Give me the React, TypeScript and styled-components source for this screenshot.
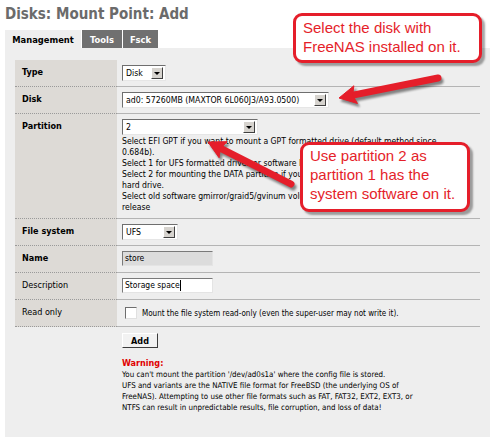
import React from "react";
import styled, { createGlobalStyle } from "styled-components";

const UI = `"DejaVu Sans Condensed", "DejaVu Sans", Verdana, sans-serif`;
const RED = "#e51e2a";

const Global = createGlobalStyle`
  html, body { margin: 0; padding: 0; background: #ffffff; }
  body { font-family: ${UI}; font-stretch: condensed; color: #000; }
`;

const Page = styled.div`
  position: relative;
  width: 500px;
  height: 444px;
  overflow: hidden;
  box-sizing: border-box;
  padding: 0 10px 0 5px;
`;

const Title = styled.h1`
  margin: 0;
  height: 30px;
  box-sizing: border-box;
  padding-top: 5px;
  font-family: ${UI};
  font-size: 15px;
  line-height: 18px;
  font-weight: bold;
  color: #6b6b6b;
`;

const TabBar = styled.div`
  display: flex;
  gap: 1px;
  height: 18px;
`;

const Tab = styled.div<{ $active?: boolean; $w: number }>`
  display: flex;
  align-items: center;
  justify-content: center;
  width: ${(p) => p.$w}px;
  font-size: 9.3px;
  font-weight: bold;
  color: ${(p) => (p.$active ? "#000" : "#fff")};
  background: ${(p) => (p.$active ? "#eeeeee" : "#707070")};
`;

const Panel = styled.div`
  background: #eeeeee;
  height: 389px;
  box-sizing: border-box;
  padding: 12px 10px 0 10px;
`;

const Row = styled.div`
  display: grid;
  grid-template-columns: 102px 1fr;
`;

const Label = styled.div<{ $bold?: boolean }>`
  background: #dddad6;
  border-bottom: 1px dotted #9a9a9a;
  padding: 6px 7px 0;
  font-size: 9px;
  line-height: 12px;
  font-weight: ${(p) => (p.$bold ? "bold" : "normal")};
`;

const Value = styled.div<{ $h?: number }>`
  height: ${(p) => p.$h ?? 27}px;
  box-sizing: border-box;
  border-bottom: 1px solid #b4b4b4;
  padding: 5px 0 0 5px;
  font-size: 8px;
  line-height: 11px;
`;

const Combo = styled.div<{ $w: number }>`
  display: flex;
  width: ${(p) => p.$w}px;
  height: 16px;
  box-sizing: border-box;
  background: #fff;
  border-style: solid;
  border-width: 1px;
  border-color: #6e6e6e #e6e6e6 #e6e6e6 #6e6e6e;
`;

const ComboText = styled.span`
  flex: 1;
  padding-left: 3px;
  font-size: 8.7px;
  line-height: 14px;
  white-space: nowrap;
  overflow: hidden;
`;

const ComboButton = styled.span`
  width: 12px;
  margin: 1px 2px 1px 0;
  box-sizing: border-box;
  background: #d6d3ce;
  border-style: solid;
  border-width: 1px;
  border-color: #fff #404040 #404040 #fff;
  display: flex;
  align-items: center;
  justify-content: center;
  &::after {
    content: "";
    border-left: 3px solid transparent;
    border-right: 3px solid transparent;
    border-top: 3px solid #000;
  }
`;

const Help = styled.div`
  margin-top: 1px;
  font-size: 8.6px;
  line-height: 11px;
  white-space: nowrap;
`;

const TextBox = styled.div<{ $disabled?: boolean }>`
  display: flex;
  align-items: center;
  width: 91px;
  height: 15px;
  box-sizing: border-box;
  padding-left: 2px;
  background: ${(p) => (p.$disabled ? "#dcdcdc" : "#ffffff")};
  border-style: solid;
  border-width: 1px;
  border-color: #7a7a7a #e4e4e4 #e4e4e4 #7a7a7a;
  font-size: 8.5px;
`;

const Caret = styled.span`
  display: inline-block;
  width: 1px;
  height: 11px;
  background: #000;
`;

const CheckLine = styled.label`
  display: flex;
  align-items: center;
  gap: 5px;
  padding: 2px 0 0 3px;
  font-size: 8px;
`;

const CheckBox = styled.span`
  width: 12px;
  height: 12px;
  box-sizing: border-box;
  background: #fff;
  border-style: solid;
  border-width: 1px;
  border-color: #6e6e6e #e0e0e0 #e0e0e0 #6e6e6e;
`;

const ActionCell = styled.div`
  padding: 6px 0 0 5px;
`;

const Button = styled.div`
  display: flex;
  align-items: center;
  justify-content: center;
  width: 36px;
  height: 15px;
  box-sizing: border-box;
  background: #f2f2f2;
  border-style: solid;
  border-width: 1px;
  border-color: #ffffff #3c3c3c #3c3c3c #ffffff;
  font-size: 9px;
  font-weight: bold;
`;

const Warning = styled.div`
  margin-top: 10px;
  font-size: 7.9px;
  line-height: 11px;
  white-space: nowrap;
`;

const WarnTitle = styled.div`
  color: #e00000;
  font-weight: bold;
  font-size: 9px;
`;

const Callout = styled.div<{ $x: number; $y: number; $w: number; $h: number; $pt: number }>`
  position: absolute;
  left: ${(p) => p.$x}px;
  top: ${(p) => p.$y}px;
  width: ${(p) => p.$w}px;
  height: ${(p) => p.$h}px;
  box-sizing: border-box;
  padding: ${(p) => p.$pt}px 6px 0 7px;
  background: #fff;
  border: 3px solid ${RED};
  border-radius: 9px;
  box-shadow: 3px 3px 2px rgba(0, 0, 0, 0.35);
  font-family: "Liberation Sans", Arial, sans-serif;
  font-stretch: normal;
  font-size: 15px;
  line-height: 19px;
  color: ${RED};
  white-space: nowrap;
`;

const Overlay = styled.svg`
  position: absolute;
  left: 0;
  top: 0;
  pointer-events: none;
`;

function Select({ w, text }: { w: number; text: string }) {
  return (
    <Combo $w={w}>
      <ComboText>{text}</ComboText>
      <ComboButton />
    </Combo>
  );
}

function Arrow({ tail, tip }: { tail: [number, number]; tip: [number, number] }) {
  const dx = tip[0] - tail[0];
  const dy = tip[1] - tail[1];
  const len = Math.hypot(dx, dy);
  const ux = dx / len;
  const uy = dy / len;
  const hl = 17;
  const hw = 9;
  const bx = tip[0] - ux * hl;
  const by = tip[1] - uy * hl;
  const nx = -uy;
  const ny = ux;
  const pts = `${tip[0]},${tip[1]} ${bx + nx * hw},${by + ny * hw} ${bx + ux * 3},${by + uy * 3} ${bx - nx * hw},${by - ny * hw}`;
  const shape = (color: string) => (
    <>
      <line x1={tail[0]} y1={tail[1]} x2={bx + ux * 4} y2={by + uy * 4} stroke={color} strokeWidth={7} strokeLinecap="round" />
      <polygon points={pts} fill={color} stroke={color} strokeWidth={1} strokeLinejoin="round" />
    </>
  );
  return (
    <>
      <g transform="translate(2,3)" filter="url(#blur)" opacity={0.45}>
        {shape("#000")}
      </g>
      {shape(RED)}
    </>
  );
}

export default function App() {
  return (
    <>
      <Global />
      <Page>
        <Title>Disks: Mount Point: Add</Title>
        <TabBar>
          <Tab $active $w={76}>Management</Tab>
          <Tab $w={40}>Tools</Tab>
          <Tab $w={35}>Fsck</Tab>
        </TabBar>
        <Panel>
          <Row>
            <Label $bold>Type</Label>
            <Value>
              <Select w={44} text="Disk" />
            </Value>
          </Row>
          <Row>
            <Label $bold>Disk</Label>
            <Value>
              <Select w={207} text="ad0: 57260MB (MAXTOR 6L060J3/A93.0500)" />
            </Value>
          </Row>
          <Row>
            <Label $bold>Partition</Label>
            <Value $h={105}>
              <Select w={136} text="2" />
              <Help>
                <div>Select EFI GPT if you want to mount a GPT formatted drive (default method since</div>
                <div>0.684b).</div>
                <div>Select 1 for UFS formatted drives or software RAID volumes.</div>
                <div>Select 2 for mounting the DATA partition if you select option 2 during installation on</div>
                <div>hard drive.</div>
                <div>Select old software gmirror/graid5/gvinum volume from a pre-0.684b</div>
                <div>release</div>
              </Help>
            </Value>
          </Row>
          <Row>
            <Label $bold>File system</Label>
            <Value>
              <Select w={56} text="UFS" />
            </Value>
          </Row>
          <Row>
            <Label $bold>Name</Label>
            <Value>
              <TextBox $disabled>store</TextBox>
            </Value>
          </Row>
          <Row>
            <Label>Description</Label>
            <Value>
              <TextBox>
                Storage space
                <Caret />
              </TextBox>
            </Value>
          </Row>
          <Row>
            <Label>Read only</Label>
            <Value>
              <CheckLine>
                <CheckBox />
                Mount the file system read-only (even the super-user may not write it).
              </CheckLine>
            </Value>
          </Row>
          <Row>
            <div />
            <ActionCell>
              <Button>Add</Button>
              <Warning>
                <WarnTitle>Warning:</WarnTitle>
                <div>You can't mount the partition '/dev/ad0s1a' where the config file is stored.</div>
                <div>UFS and variants are the NATIVE file format for FreeBSD (the underlying OS of</div>
                <div>FreeNAS). Attempting to use other file formats such as FAT, FAT32, EXT2, EXT3, or</div>
                <div>NTFS can result in unpredictable results, file corruption, and loss of data!</div>
              </Warning>
            </ActionCell>
          </Row>
        </Panel>

        <Overlay width={500} height={444} viewBox="0 0 500 444">
          <defs>
            <filter id="blur" x="-20%" y="-20%" width="140%" height="140%">
              <feGaussianBlur stdDeviation="1.2" />
            </filter>
          </defs>
          <Arrow tail={[438, 78]} tip={[339, 98]} />
          <Arrow tail={[291, 184]} tip={[208, 142]} />
        </Overlay>

        <Callout $x={293} $y={13} $w={189} $h={50} $pt={2}>
          <div>Select the disk with</div>
          <div>FreeNAS installed on it.</div>
        </Callout>
        <Callout $x={300} $y={142} $w={170} $h={70} $pt={1}>
          <div>Use partition 2 as</div>
          <div>partition 1 has the</div>
          <div>system software on it.</div>
        </Callout>
      </Page>
    </>
  );
}
